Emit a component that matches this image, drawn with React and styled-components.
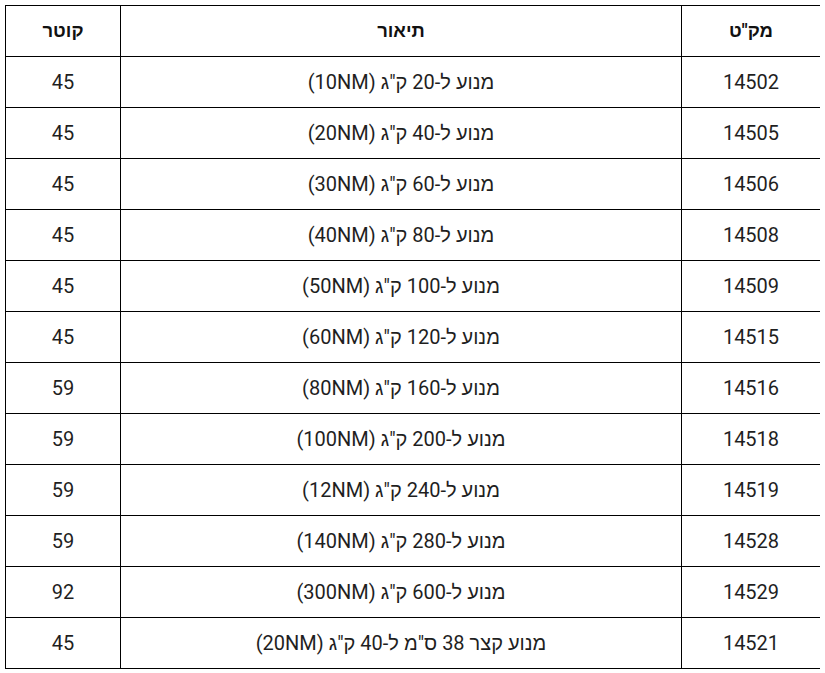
import React from "react"
import styled, { createGlobalStyle } from "styled-components"

const GlobalStyle = createGlobalStyle`
  body {
    margin: 5px;
    background: #fff;
    font-family: Roboto, "Liberation Sans", sans-serif;
    color: #1f1f1f;
  }
`

const Table = styled.table`
  direction: rtl;
  width: 815px;
  table-layout: fixed;
  border-collapse: collapse;
`

const Cell = styled.td`
  height: 50px;
  padding: 0;
  border: 1px solid #000;
  text-align: center;
  vertical-align: middle;
  font-size: 20px;
`

const HeadCell = styled(Cell).attrs({ as: "th" })`
  font-size: 18.5px;
  font-weight: bold;
  color: #111;
`

const rows = [
  ["14502", "מנוע ל-20 ק\"ג (10NM)", "45"],
  ["14505", "מנוע ל-40 ק\"ג (20NM)", "45"],
  ["14506", "מנוע ל-60 ק\"ג (30NM)", "45"],
  ["14508", "מנוע ל-80 ק\"ג (40NM)", "45"],
  ["14509", "מנוע ל-100 ק\"ג (50NM)", "45"],
  ["14515", "מנוע ל-120 ק\"ג (60NM)", "45"],
  ["14516", "מנוע ל-160 ק\"ג (80NM)", "59"],
  ["14518", "מנוע ל-200 ק\"ג (100NM)", "59"],
  ["14519", "מנוע ל-240 ק\"ג (12NM)", "59"],
  ["14528", "מנוע ל-280 ק\"ג (140NM)", "59"],
  ["14529", "מנוע ל-600 ק\"ג (300NM)", "92"],
  ["14521", "מנוע קצר 38 ס\"מ ל-40 ק\"ג (20NM)", "45"],
]

const App = () => (
  <>
    <GlobalStyle />
    <Table>
      <colgroup>
        <col style={{ width: 139 }} />
        <col style={{ width: 561 }} />
        <col style={{ width: 115 }} />
      </colgroup>
      <thead>
        <tr>
          <HeadCell>מק"ט</HeadCell>
          <HeadCell>תיאור</HeadCell>
          <HeadCell>קוטר</HeadCell>
        </tr>
      </thead>
      <tbody>
        {rows.map(([sku, desc, size]) => (
          <tr key={sku}>
            <Cell>{sku}</Cell>
            <Cell>{desc}</Cell>
            <Cell>{size}</Cell>
          </tr>
        ))}
      </tbody>
    </Table>
  </>
)

export default App
